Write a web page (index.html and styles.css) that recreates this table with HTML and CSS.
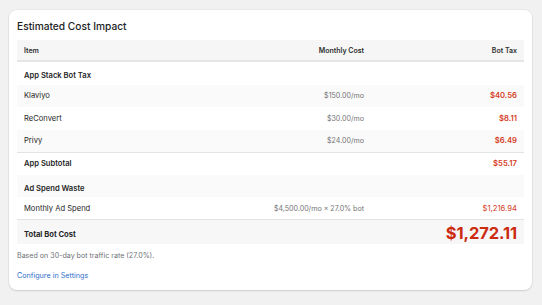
FILE: index.html
```html
<!DOCTYPE html>
<html>
<head>
<meta charset="utf-8">
<link rel="stylesheet" href="styles.css">
</head>
<body>
<div class="card">
  <h2 class="title">Estimated Cost Impact</h2>
  <div class="table">
    <div class="row head">
      <div class="c1">Item</div><div class="c2">Monthly Cost</div><div class="c3">Bot Tax</div>
    </div>
    <div class="row section"><div class="c1 strong">App Stack Bot Tax</div><div class="c2"></div><div class="c3"></div></div>
    <div class="row alt"><div class="c1">Klaviyo</div><div class="c2 muted">$150.00/mo</div><div class="c3 red strong">$40.56</div></div>
    <div class="row"><div class="c1">ReConvert</div><div class="c2 muted">$30.00/mo</div><div class="c3 red strong">$8.11</div></div>
    <div class="row alt bordered"><div class="c1">Privy</div><div class="c2 muted">$24.00/mo</div><div class="c3 red strong">$6.49</div></div>
    <div class="row"><div class="c1 strong">App Subtotal</div><div class="c2"></div><div class="c3 red strong">$55.17</div></div>
    <div class="row alt section"><div class="c1 strong">Ad Spend Waste</div><div class="c2"></div><div class="c3"></div></div>
    <div class="row bordered"><div class="c1">Monthly Ad Spend</div><div class="c2 muted">$4,500.00/mo × 27.0% bot</div><div class="c3 red">$1,216.94</div></div>
    <div class="row total"><div class="c1 bold">Total Bot Cost</div><div class="c2"></div><div class="c3 big">$1,272.11</div></div>
  </div>
  <p class="note">Based on 30-day bot traffic rate (27.0%).</p>
  <a class="link" href="#">Configure in Settings</a>
</div>
</body>
</html>
```
FILE: styles.css
```css
html, body { margin: 0; padding: 0; }
body {
  background: #f1f1f1;
  font-family: Inter, "Noto Sans", sans-serif;
  color: #303030;
  padding: 10px 10px 10px 9px;
}
.card {
  background: #fff;
  border-radius: 8px;
  box-shadow: 0 1px 2px rgba(0,0,0,0.12), 0 0 0 1px rgba(0,0,0,0.03);
  padding: 8px 8px 8px 8px;
}
.title {
  margin: 0 0 6px 0;
  font-size: 10.2px;
  line-height: 16px;
  font-weight: 500;
  color: #202223;
}
.table { display: flex; flex-direction: column; }
.row {
  display: grid;
  grid-template-columns: 1fr 120px 153px;
  height: 22.5px;
  align-items: center;
  font-size: 7.6px;
  color: #262626;
}
.row > div { padding: 0 7px; white-space: nowrap; }
.c2, .c3 { text-align: right; }
.head { background: #f6f6f7; border-bottom: 2px solid #e6e6e8; height: 22px; box-sizing: border-box; font-weight: 600; font-size: 7px; color: #303030; }
.section > div { padding-top: 5px; }
.section.alt { height: 22px; }
.alt { background: #fafafa; }
.bordered { border-bottom: 1px solid #e3e3e3; height: 23px; box-sizing: border-box; }
.total { background: #f7f7f7; height: 24px; }
.total > div { padding-top: 4px; }
.total > .big { padding-top: 1px; }
.strong { font-weight: 600; }
.bold { font-weight: 700; }
.muted { color: #747474; font-size: 7.1px; }
.red { color: #d5401f; font-size: 7.7px; }
.big { font-size: 16.5px; font-weight: 700; color: #cc2b10; letter-spacing: -0.1px; }
.note { margin: 6px 0 0 0; font-size: 7.1px; line-height: 12px; color: #6d7175; }
.link { display: block; margin-top: 8px; font-size: 7.2px; line-height: 12px; color: #2c6ecb; text-decoration: none; }
```
